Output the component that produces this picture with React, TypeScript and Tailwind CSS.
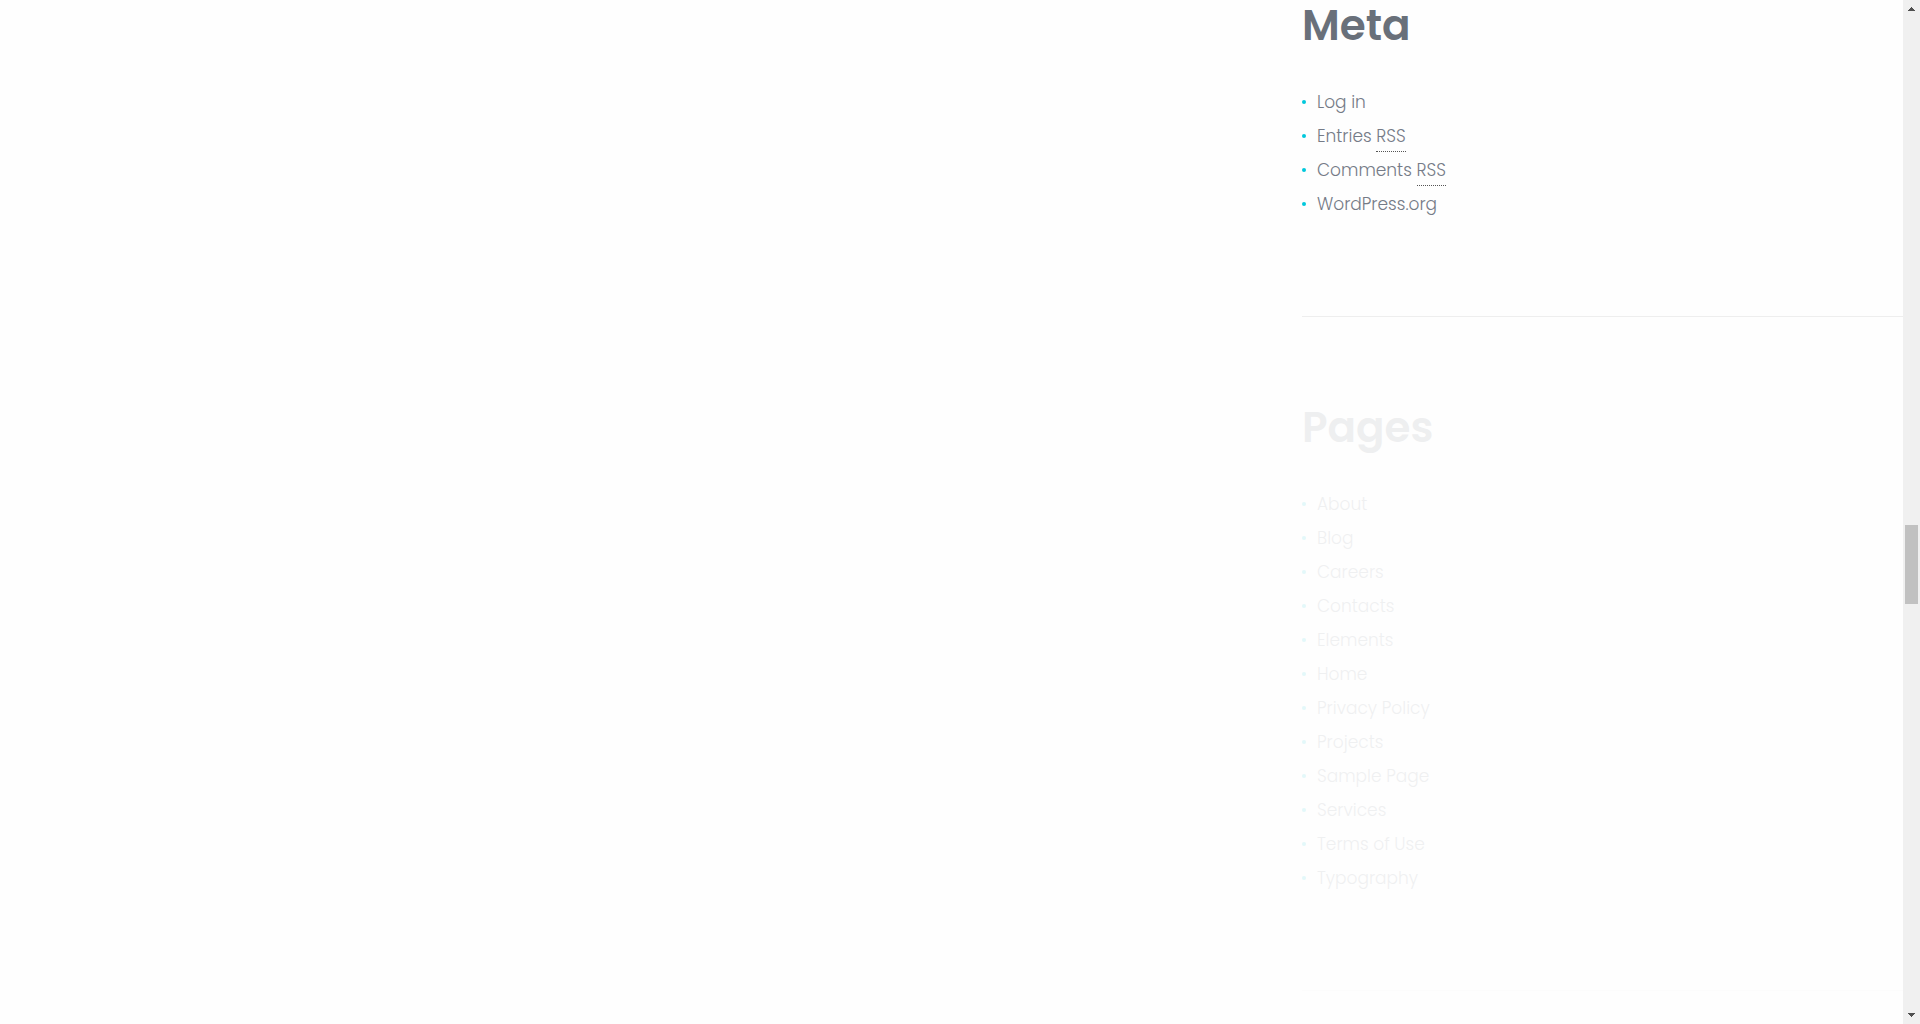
import React from "react";

type Item = { label: string; abbr?: string };

const meta: Item[] = [
  { label: "Log in" },
  { label: "Entries", abbr: "RSS" },
  { label: "Comments", abbr: "RSS" },
  { label: "WordPress.org" },
];

const pages: Item[] = [
  "About",
  "Blog",
  "Careers",
  "Contacts",
  "Elements",
  "Home",
  "Privacy Policy",
  "Projects",
  "Sample Page",
  "Services",
  "Terms of Use",
  "Typography",
].map((label) => ({ label }));

function Widget({ title, items }: { title: string; items: Item[] }) {
  return (
    <>
      <h2 className="text-[42px] leading-[52px] font-semibold text-[#69707a]">{title}</h2>
      <ul className="mt-[33px]">
        {items.map((item) => (
          <li key={item.label} className="flex h-[34px] items-center gap-[11px]">
            <span className="size-1 rounded-full bg-[#00c8dc]" />
            <a href="#" className="text-[17px] leading-[30px] font-light text-[#757b87]">
              {item.label}
              {item.abbr && (
                <>
                  {" "}
                  <abbr
                    title="Really Simple Syndication"
                    className="inline-block border-b border-dotted border-[#555555] no-underline"
                  >
                    {item.abbr}
                  </abbr>
                </>
              )}
            </a>
          </li>
        ))}
      </ul>
    </>
  );
}

function Scrollbar() {
  return (
    <div className="flex w-[17px] flex-col items-center bg-[#f0f0f0]" aria-hidden="true">
      <svg className="h-[17px] w-[17px]" viewBox="0 0 17 17" shapeRendering="crispEdges">
        <path d="M8 7h1v1h1v1h1v1h1v1H5v-1h1V9h1V8h1z" fill="#505050" />
      </svg>
      <div className="grow-[508]" />
      <div className="h-[79px] w-[13px] bg-[#c1c1c1]" />
      <div className="grow-[403]" />
      <svg className="h-[17px] w-[17px]" viewBox="0 0 17 17" shapeRendering="crispEdges">
        <path d="M5 6h7v1h-1v1h-1v1H9v1H8V9H7V8H6V7H5z" fill="#505050" />
      </svg>
    </div>
  );
}

export default function App() {
  return (
    <div className="flex min-h-screen bg-[#fefefe] font-['Poppins','Inter',sans-serif]">
      <div className="grid grow grid-cols-[1302fr_601fr]">
        <main />
        <aside className="min-w-0">
          <section className="border-b border-[#eeeeee] pb-[95px]">
            <Widget title="Meta" items={meta} />
          </section>
          <section className="border-b border-[#eeeeee] pt-[85px] pb-[95px] opacity-10">
            <Widget title="Pages" items={pages} />
          </section>
        </aside>
      </div>
      <Scrollbar />
    </div>
  );
}
